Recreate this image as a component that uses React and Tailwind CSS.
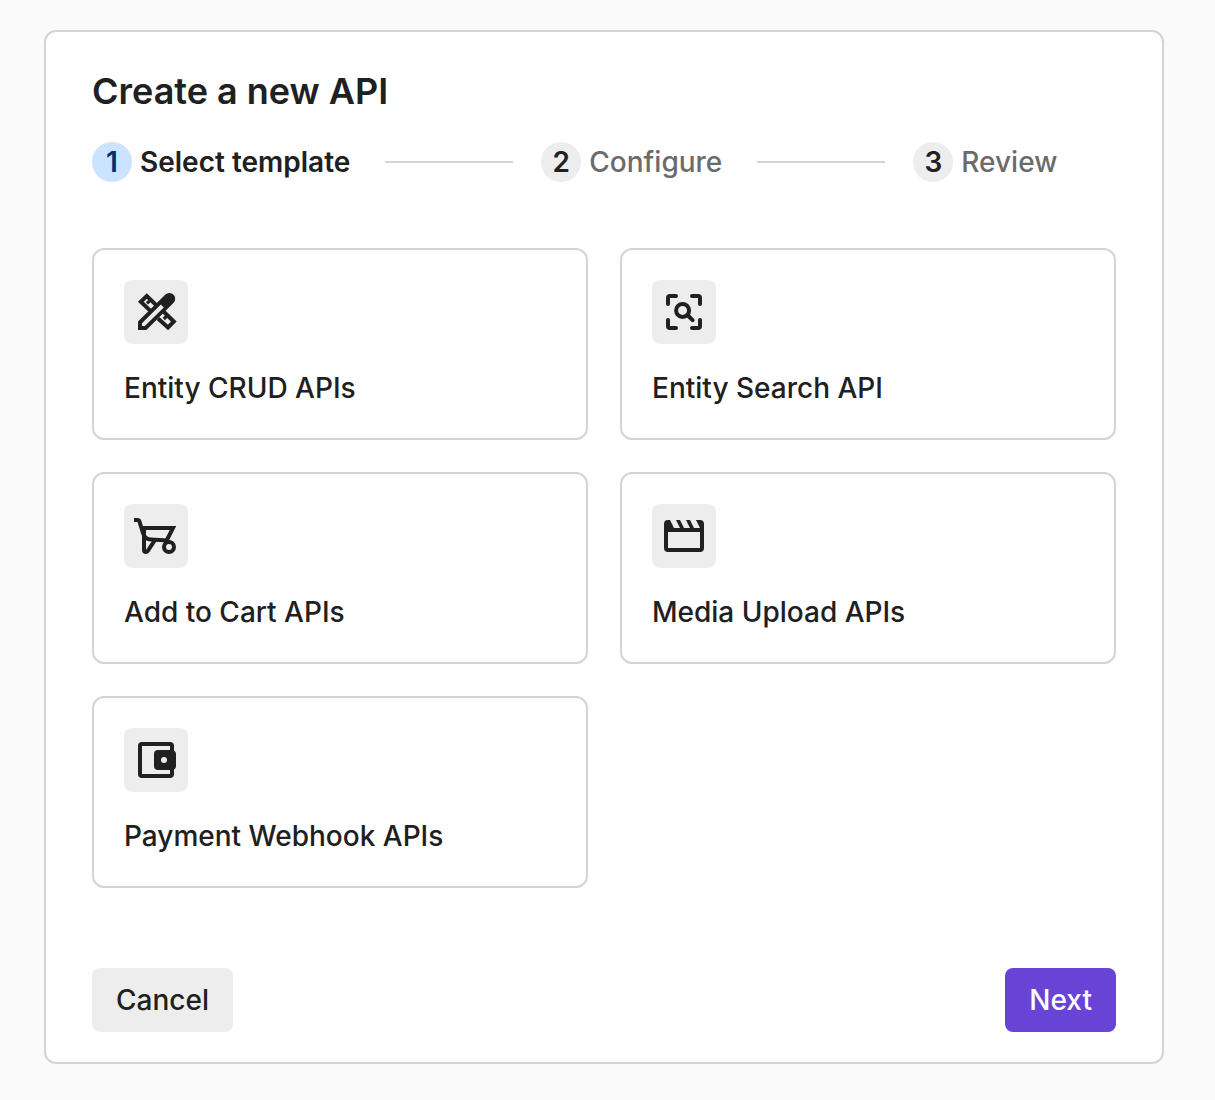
import React from "react";

function Glyph({ children }) {
  return (
    <svg viewBox="0 0 24 24" className="size-12" fill="none" stroke="currentColor" strokeWidth="2" aria-hidden="true">
      {children}
    </svg>
  );
}

function ToolsIcon() {
  return (
    <Glyph>
      <path d="M9.800 13.500 3.600 7.200 7.400 3.500 22 17.200M12 16l5.900 4.600 3.500-3.500" stroke="none" />
      <path d="M10 12.200 4.400 6.900 7.400 4l5.400 5.200M13 15.200l5 4.500 2.900-2.900-5.400-5.300" />
      <path d="M9.300 5.900 7.500 7.700M17.700 13.700l-1.800 1.800" strokeWidth="1.600" />
      <path d="M3 21v-4.200L16.700 3.300a2.900 2.900 0 0 1 4.100 4.100L7.200 21z" fill="currentColor" stroke="none" />
      <path d="M5 19v-1.400l9.400-9.300 1.500 1.500L6.400 19z" className="fill-[#ededed]" stroke="none" />
    </Glyph>
  );
}

function SearchFrameIcon() {
  return (
    <Glyph>
      <path d="M8 4H5a1 1 0 0 0-1 1v3M16 4h3a1 1 0 0 1 1 1v3M4 16v3a1 1 0 0 0 1 1h3M20 16v3a1 1 0 0 1-1 1h-3M13.700 13.500l2.600 2.600" strokeLinecap="round" />
      <circle cx="11.300" cy="11.200" r="3.250" />
    </Glyph>
  );
}

function CartIcon() {
  return (
    <Glyph>
      <path d="M1 4h1.700a1 1 0 0 1 1 .7L5.500 10.500Q6.400 13.700 9.500 13.800L18 14.300" />
      <path d="M4.800 8h15.700l-3.300 6.500M6 8v11c0 1.200 1.300 1.300 1.900.400L11.500 14" />
      <circle cx="18.500" cy="17.500" r="2.500" />
    </Glyph>
  );
}

function MovieIcon() {
  return (
    <Glyph>
      <path fill="currentColor" stroke="none" fillRule="evenodd" d="M18 4l2 4h-3l-2-4h-2l2 4h-3l-2-4H8l2 4H7L5 4H4a2 2 0 0 0-2 2v12a2 2 0 0 0 2 2h16a2 2 0 0 0 2-2V6a2 2 0 0 0-2-2zM4 10h16v8H4z" />
    </Glyph>
  );
}

function WalletIcon() {
  return (
    <Glyph>
      <path fill="currentColor" stroke="none" fillRule="evenodd" d="M5 3h14a2 2 0 0 1 2 2v2.200a2 2 0 0 1 1 1.800v6a2 2 0 0 1-1 1.800V19a2 2 0 0 1-2 2H5a2 2 0 0 1-2-2V5a2 2 0 0 1 2-2zm0 2v14h14v-2h-6a2 2 0 0 1-2-2V9a2 2 0 0 1 2-2h6V5H5zm11 5.500a1.500 1.500 0 1 0 0 3 1.500 1.500 0 0 0 0-3z" />
    </Glyph>
  );
}

const templates = [
  { name: "Entity CRUD APIs", Icon: ToolsIcon },
  { name: "Entity Search API", Icon: SearchFrameIcon },
  { name: "Add to Cart APIs", Icon: CartIcon },
  { name: "Media Upload APIs", Icon: MovieIcon },
  { name: "Payment Webhook APIs", Icon: WalletIcon },
];

const steps = ["Select template", "Configure", "Review"];

export default function App() {
  return (
    <div className="min-h-screen bg-[#fafafa] pt-[30px] pr-[51px] pb-9 pl-11 font-['Inter',sans-serif] text-[#202020]">
      <main className="rounded-xl border-2 border-stone-300 bg-white px-[46px] pt-[38px] pb-[30px]">
        <h1 className="text-4xl leading-[42px] font-semibold">Create a new API</h1>
        <ol className="mt-[30px] flex items-center">
          {steps.map((step, i) => (
            <li key={step} className="flex items-center" aria-current={i === 0 ? "step" : undefined}>
              {i > 0 && <span className="mr-7 ml-[35px] h-0.5 w-32 bg-stone-300" />}
              <span className={i === 0 ? "flex size-10 items-center justify-center rounded-full bg-[#cce3ff] text-[28px] font-semibold text-[#002e78]" : "flex size-10 items-center justify-center rounded-full bg-[#ededed] text-[28px] font-semibold"}>{i + 1}</span>
              <span className={i === 0 ? "ml-2 text-[28px] leading-10 font-semibold" : "ml-2 text-[28px] leading-10 font-medium text-[#6b6b6b]"}>{step}</span>
            </li>
          ))}
        </ol>
        <div className="mt-[66px] grid grid-cols-2 gap-8">
          {templates.map(({ name, Icon }) => (
            <button key={name} type="button" className="flex flex-col items-start rounded-xl border-2 border-stone-300 p-[30px] text-left">
              <span className="flex size-16 items-center justify-center rounded-lg bg-[#ededed]"><Icon /></span>
              <span className="mt-6 text-[28px] leading-10 font-medium">{name}</span>
            </button>
          ))}
        </div>
        <div className="mt-20 flex justify-between">
          <button type="button" className="h-16 rounded-lg bg-[#ededed] px-6 text-[28px] font-medium">Cancel</button>
          <button type="button" className="h-16 rounded-lg bg-[#6744d6] px-6 text-[28px] font-medium text-white">Next</button>
        </div>
      </main>
    </div>
  );
}
